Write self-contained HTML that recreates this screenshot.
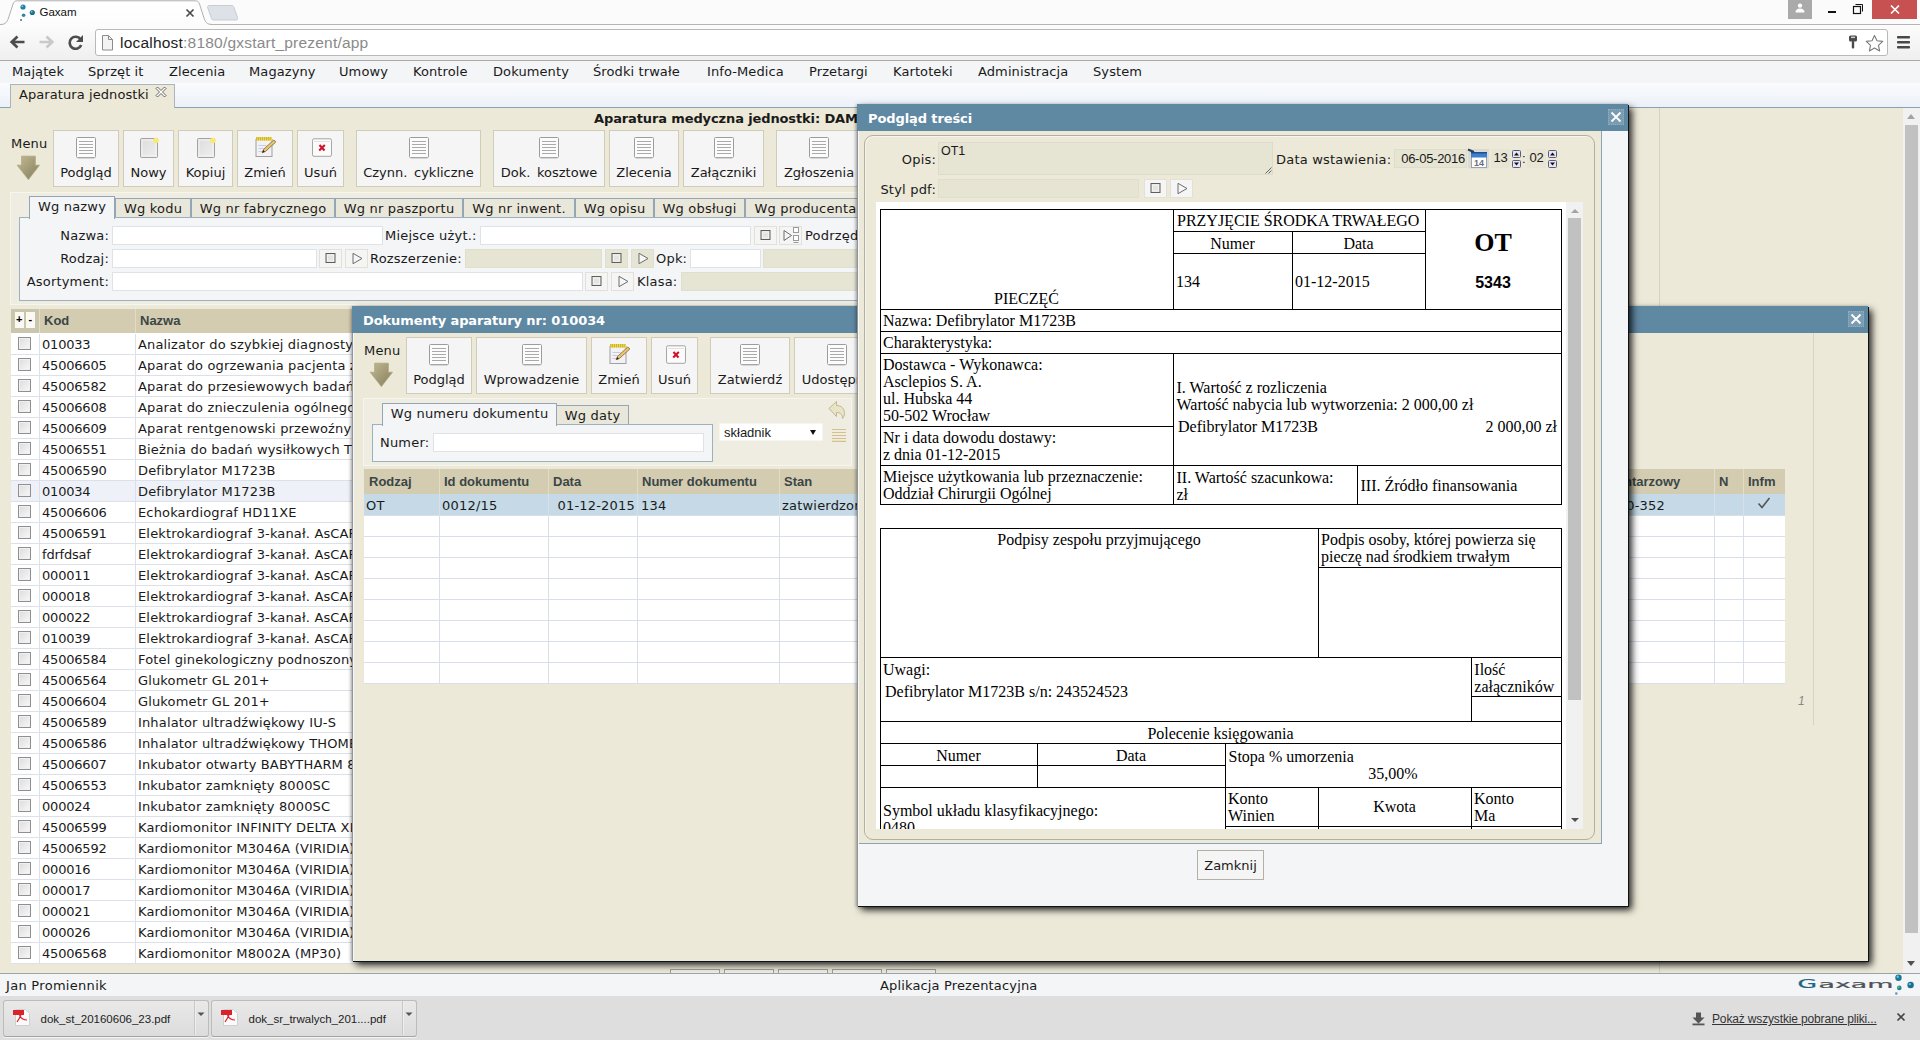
<!DOCTYPE html>
<html lang="pl"><head><meta charset="utf-8"><title>Gaxam</title>
<style>
*{box-sizing:border-box;margin:0;padding:0}
html,body{width:1920px;height:1040px;overflow:hidden;background:#ece9d8}
body{font-family:"DejaVu Sans","Liberation Sans",sans-serif;font-size:13px;color:#1a1a1a;position:relative}
.abs{position:absolute}
.ui{font-family:"Liberation Sans",sans-serif}
.b{font-weight:bold}
svg.ic{display:block;overflow:visible}
/* chrome */
#frame{left:0;top:0;width:1920px;height:24px;background:#fbfbfb}
#tbar{left:0;top:24px;width:1920px;height:37px;background:linear-gradient(#fcfcfc,#efefef);border-top:1px solid #b4b4b4;border-bottom:1px solid #a9a9a9}
#url{left:95px;top:29px;width:1793px;height:27px;background:#fff;border:1px solid #b9b9b9;border-radius:3px}
#menubar{left:0;top:61px;width:1920px;height:22px;background:#f3f5f7}
#tabrow{left:0;top:83px;width:1920px;height:25px;background:linear-gradient(#fafbfd,#ecf1f8);border-bottom:1px solid #8aa0b4}
#ptab{left:10px;top:84px;width:165px;height:24px;background:#ece9d8;border:1px solid #aab4be;border-bottom:none}
.mi{position:absolute;top:64px;font-size:13px;white-space:nowrap;line-height:16px;letter-spacing:.1px}
/* status */
#status{left:0;top:973px;width:1920px;height:23px;background:#f3f5f7;border-top:1px solid #9aa4ab}
#dlbar{left:0;top:996px;width:1920px;height:44px;background:#dedede}
/* toolbar buttons */
.tb{position:absolute;background:#f5f5f5;border:1px solid #d0ccb9;text-align:center;white-space:nowrap;font-size:13px}
.tb span{position:absolute;left:0;right:0;bottom:5px;line-height:16px;word-spacing:2.500px}
.ftab{position:absolute;border:1px solid #94a6b5;border-bottom:none;background:#e9e7d9;text-align:center;line-height:19px;white-space:nowrap;letter-spacing:.2px}
.ftab.sel{background:#f3f5f7;line-height:20px}

.inp{position:absolute;height:19px;background:#fff;border:1px solid #dfe2e6}
.inp.dis{background:#e6e4d3;border-color:#e0decd}
.lbl{position:absolute;white-space:nowrap;line-height:16px;margin-top:1px;letter-spacing:.2px}
.sb{position:absolute;width:23px;height:19px;background:#f5f5f5;border:1px solid #e3e1d5}
.sb.dis{background:#e6e4d3;border-color:#e0decd}
.pm{position:absolute;width:9.600px;height:15.800px;background:#faf9f2;font-size:11px;line-height:15px;text-align:center;color:#000;font-family:"Liberation Sans",sans-serif;font-weight:bold}
.gh{position:absolute;font-family:"Liberation Sans",sans-serif;font-weight:bold;font-size:13px;color:#3b4646;line-height:16px;white-space:nowrap;margin-top:1px}
.gr{position:relative;height:21px;background:#fff;border-bottom:1px solid #dce1e9;white-space:nowrap;overflow:hidden}
.gr.sel{background:#eef2f8}
.gr b{font-weight:normal;position:absolute;top:3px;line-height:16px}
.gr .c1{left:31px;letter-spacing:-.2px}.gr .c2{left:127px;letter-spacing:.15px}
.gr:before{content:"";position:absolute;left:28px;top:0;width:1px;height:21px;background:#dce1e9}
.gr:after{content:"";position:absolute;left:124px;top:0;width:1px;height:21px;background:#dce1e9}
.cb{position:absolute;left:7px;top:3px;width:13px;height:13px;border:1px solid #8e8f8f;background:linear-gradient(135deg,#dcdcdc,#f8f8f8);box-shadow:inset 0 0 0 1px #f0f0f0}
/* dialogs */
.dlg{position:absolute;background:#ece9d8;box-shadow:1px 1px 0 #0c1216,4px 4px 7px rgba(0,0,0,.85),-1px 1px 3px rgba(0,0,0,.28)}
.ledge{position:absolute;left:0;top:27px;bottom:0;width:2px;background:#f6f8fa;border-left:1px solid #8f949e}
.dtitle{position:absolute;left:0;top:0;right:0;height:27px;background:#5f88a2;color:#fff;font-weight:bold;font-size:13px;line-height:29px;padding-left:11px;letter-spacing:-.1px}
.xbtn{position:absolute;top:5px;right:4px;width:16px;height:16px;background:#7a9cb1;border:1px dotted #8fadbf}
.xbtn svg{position:absolute;left:-1px;top:-1px}
.ln{position:absolute;background:#000;display:block}
.st{position:absolute;white-space:nowrap;line-height:17px}
.dl{position:absolute;top:1000px;width:205.500px;height:36.500px;background:linear-gradient(#e9e9e9,#dcdcdc);border:1px solid #bcbcbc;border-bottom-color:#a4a4a4;border-radius:3px;box-shadow:0 1px 0 #f4f4f4}
.dl i{position:absolute;left:189.500px;top:0;width:1px;height:34px;background:#c8c8c8;border-right:1px solid #eee;box-sizing:content-box}
.dl span{position:absolute;left:36.500px;top:10px;font-family:"Liberation Sans",sans-serif;font-size:11.500px;line-height:16px;color:#222;white-space:nowrap}

</style></head><body>
<svg width="0" height="0" style="position:absolute"><defs>
<linearGradient id="ga" x1="0" y1="0" x2="1" y2="1"><stop offset="0" stop-color="#c2b994"/><stop offset="1" stop-color="#857d5a"/></linearGradient>
<symbol id="arrow" viewBox="0 0 24 26"><path d="M5.700 1.200H19.300V10.200H23.500L12.400 24.600L1.200 10.200H5.700Z" fill="url(#ga)" stroke="#b0a882" stroke-width=".9"/></symbol>
<symbol id="doc" viewBox="0 0 22 24"><rect x="1.500" y="1.500" width="19" height="20" rx="1" fill="#fcfcfc" stroke="#9c9c9c"/><path d="M4 5.500h14M4 8.500h14M4 11.500h14M4 14.500h14M4 17.500h14" stroke="#a9a9a9"/><path d="M2.500 22.300h17" stroke="#cfcfcf"/></symbol>
<symbol id="new" viewBox="0 0 22 24"><defs><linearGradient id="gn" x1="0" y1="0" x2="1" y2="1"><stop offset="0" stop-color="#dcdcdc"/><stop offset="1" stop-color="#efefef"/></linearGradient></defs><rect x="2.500" y="2.500" width="17" height="19" rx="1" fill="url(#gn)" stroke="#a2a2a2"/><rect x="4" y="4" width="14" height="16" fill="none" stroke="#f4f4f4"/><circle cx="18" cy="4.500" r="2.800" fill="#f7ea70"/></symbol>
<symbol id="edit" viewBox="0 0 22 24"><rect x="2" y="3.500" width="16" height="17" fill="#f1f1f6" stroke="#a0a0a0"/><path d="M4.500 9.500h8M4.500 12.500h6M4.500 15.500h4" stroke="#c8cbe0"/><rect x="2" y="1" width="16" height="3.600" fill="#ecd84a"/><path d="M2.500 2.800h15" stroke="#b79c28" stroke-width="3.600" stroke-dasharray=".6 1.300"/><path d="M8.200 16.700l1.300-3.200L19.800 4l2 2-10.400 9.500z" fill="#e8c878" stroke="#8d6b2a" stroke-width=".9"/><path d="M8.200 16.700l1.100-2.600 1.600 1.700z" fill="#222"/></symbol>
<symbol id="del" viewBox="0 0 22 24"><rect x="2.500" y="2.800" width="19" height="17.500" rx="1.500" fill="#fbfbfb" stroke="#a6a6a6"/><path d="M4 5.500h16" stroke="#e2e2e2"/><path d="M9.500 9l5 5.500m.3-5.500l-5.600 5.500" stroke="#d0122a" stroke-width="2.100"/></symbol>
<symbol id="sq" viewBox="0 0 21 19"><rect x="6" y="4.500" width="9" height="9" fill="#e4e4e2" stroke="#5e5e5e"/><rect x="7.500" y="6" width="6" height="6" fill="none" stroke="#f2f2f0"/></symbol>
<symbol id="tri" viewBox="0 0 21 19"><path d="M7 4.300l9 5.200-9 5.200z" fill="#f6f6f6" stroke="#6d6d6d"/></symbol>
<symbol id="tree" viewBox="0 0 21 19"><path d="M4 4.500l7.500 5-7.500 5z" fill="#f6f6f6" stroke="#6d6d6d"/><rect x="13.500" y="1.500" width="5" height="5" fill="#fff" stroke="#9a9a9a"/><rect x="13.500" y="9.500" width="5" height="5" fill="#fff" stroke="#9a9a9a"/><path d="M13.500 16.500h5" stroke="#9a9a9a"/></symbol>
</defs></svg>
<div class="abs" id="frame"></div>
<div class="abs" id="tbar"></div>
<svg class="abs" style="left:0;top:0" width="260" height="26"><defs><linearGradient id="tg" x1="0" y1="0" x2="0" y2="1"><stop offset="0" stop-color="#ffffff"/><stop offset="1" stop-color="#fcfcfc"/></linearGradient></defs>
<path d="M0 24.5C6 24.5 7 22 8.5 18L13 4C14 1.5 15 0.8 17.5 0.8H195C197.500 0.800 198.500 1.500 199.500 4L204 18C205.500 22 206.500 24.500 212.500 24.500V26H0Z" fill="url(#tg)" stroke="#b0b0b0" stroke-width="1"/>
<rect x="0" y="25" width="260" height="1" fill="#fcfcfc"/>
<path d="M209 5.500H231.500C233 5.500 233.500 6 234 7.500L237.500 17.500C238 19 237.500 20 236 20H214C212.500 20 211.800 19.500 211.300 18L207.800 8C207.300 6.500 207.700 5.500 209 5.500Z" fill="#dde1e8" stroke="#c9ccd2" stroke-width="1"/>
<circle cx="23" cy="7" r="2.600" fill="#1f7f9c"/><circle cx="22.300" cy="6.300" r="1" fill="#6fc0d8"/>
<circle cx="32.300" cy="12.500" r="2.600" fill="#1d6f90"/><circle cx="31.600" cy="11.800" r="1" fill="#6fc0d8"/>
<circle cx="23.600" cy="15.200" r="1.800" fill="#2a8796"/><circle cx="21" cy="20" r="1" fill="#46708a"/>
<path d="M186.500 9.500l7 7m0-7l-7 7" stroke="#4a4a4a" stroke-width="1.700"/>
</svg>
<div class="abs ui" style="left:39.500px;top:5px;font-size:11.500px;line-height:15px;color:#111">Gaxam</div>
<!-- window controls -->
<div class="abs" style="left:1788px;top:0;width:24px;height:19px;background:#aaa"></div>
<svg class="abs" style="left:1788px;top:0" width="132" height="20"><circle cx="12" cy="5.600" r="2.200" fill="#fff"/><path d="M7.500 12.500c0-3 2-4 4.500-4s4.500 1 4.500 4z" fill="#fff"/>
<rect x="40" y="11" width="8" height="2" fill="#111"/>
<path d="M67.500 4.500h7v7" fill="none" stroke="#111" stroke-width="1"/><rect x="65.500" y="6.500" width="7" height="7" fill="#fcfcfc" stroke="#111" stroke-width="1.200"/>
<rect x="84" y="0" width="45" height="19" fill="#c75050"/><path d="M103 5.500l8 8m0-8l-8 8" stroke="#fff" stroke-width="1.700"/></svg>
<!-- nav icons -->
<svg class="abs" style="left:0;top:26px" width="120" height="34">
<path d="M24.500 16H13M17.500 10.500l-5.800 5.500 5.800 5.500" fill="none" stroke="#4d4d4d" stroke-width="2.700" stroke-linejoin="miter"/>
<path d="M39.500 16H51M46.500 10.500l5.800 5.500-5.800 5.500" fill="none" stroke="#c9c9c9" stroke-width="2.700"/>
<path d="M80.500 13.200A6 6 0 1 0 81.200 19" fill="none" stroke="#4d4d4d" stroke-width="2.700"/><path d="M83 9v7h-7z" fill="#4d4d4d"/>
</svg>
<div class="abs" id="url"></div>
<svg class="abs" style="left:0;top:26px" width="120" height="34"><path d="M102.500 9.500h6l4 4v10.500h-10z" fill="#f3f3f3" stroke="#8c8c8c" stroke-width="1"/><path d="M108.500 9.500v4h4" fill="none" stroke="#8c8c8c"/>
</svg>
<div class="abs ui" style="left:120px;top:33px;font-size:15.500px;line-height:19px;color:#222;letter-spacing:.21px">localhost<span style="color:#8a8a8a">:8180/gxstart_prezent/app</span></div>
<svg class="abs" style="left:1840px;top:28px" width="80" height="30">
<rect x="9" y="7.500" width="8" height="6" rx="1.500" fill="#4a4a4a"/><rect x="11" y="8.600" width="4" height="1.500" fill="#cfcfcf"/><rect x="11.800" y="13" width="2.400" height="7.500" rx="1" fill="#4a4a4a"/>
<path d="M34.500 7.500l2.500 5.200 5.700.7-4.200 3.900 1.100 5.600-5.100-2.800-5.100 2.800 1.100-5.600-4.200-3.900 5.700-.7z" fill="#fff" stroke="#7a7a7a" stroke-width="1.100" stroke-linejoin="round"/>
<rect x="57" y="8" width="13" height="2.600" rx=".8" fill="#484848"/><rect x="57" y="13" width="13" height="2.600" rx=".8" fill="#484848"/><rect x="57" y="18" width="13" height="2.600" rx=".8" fill="#484848"/>
</svg>
<div class="abs" id="menubar"></div>
<div class="mi" style="left:12px">Majątek</div><div class="mi" style="left:88px">Sprzęt it</div><div class="mi" style="left:169px">Zlecenia</div><div class="mi" style="left:249px">Magazyny</div><div class="mi" style="left:339px">Umowy</div><div class="mi" style="left:413px">Kontrole</div><div class="mi" style="left:493px">Dokumenty</div><div class="mi" style="left:593px">Środki trwałe</div><div class="mi" style="left:707px">Info-Medica</div><div class="mi" style="left:809px">Przetargi</div><div class="mi" style="left:893px">Kartoteki</div><div class="mi" style="left:978px">Administracja</div><div class="mi" style="left:1093px">System</div>
<div class="abs" id="tabrow"></div>
<div class="abs" id="ptab"></div>
<div class="lbl" style="left:19px;top:86px;letter-spacing:.08px">Aparatura jednostki</div>
<svg class="abs" style="left:153.500px;top:84.500px" width="14" height="14"><path d="M2 3.500L3.500 2 7 5.500 10.500 2 12 3.500 8.500 7 12 10.500 10.500 12 7 8.500 3.500 12 2 10.500 5.500 7Z" fill="#fff" stroke="#555" stroke-width=".9"/></svg>
<div id="main">
<div class="lbl b" style="left:594px;top:110px;letter-spacing:-.12px">Aparatura medyczna jednostki: DAM</div>
<div class="abs" style="left:1659px;top:108px;width:1px;height:865px;background:#d5d3c6"></div>
<div class="lbl" style="left:11px;top:135px">Menu</div><svg class="ic" width="24" height="26" style="position:absolute;left:16px;top:155px"><use href="#arrow"/></svg>
<div class="tb" style="left:53px;top:130px;width:66px;height:57px"><svg class="ic" width="22" height="24" style="position:absolute;top:5px;left:50%;margin-left:-11px"><use href="#doc"/></svg><span>Podgląd</span></div>
<div class="tb" style="left:123px;top:130px;width:51px;height:57px"><svg class="ic" width="22" height="24" style="position:absolute;top:5px;left:50%;margin-left:-11px"><use href="#new"/></svg><span>Nowy</span></div>
<div class="tb" style="left:178px;top:130px;width:55px;height:57px"><svg class="ic" width="22" height="24" style="position:absolute;top:5px;left:50%;margin-left:-11px"><use href="#new"/></svg><span>Kopiuj</span></div>
<div class="tb" style="left:237px;top:130px;width:56px;height:57px"><svg class="ic" width="22" height="24" style="position:absolute;top:5px;left:50%;margin-left:-11px"><use href="#edit"/></svg><span>Zmień</span></div>
<div class="tb" style="left:297px;top:130px;width:47px;height:57px"><svg class="ic" width="22" height="24" style="position:absolute;top:5px;left:50%;margin-left:-11px"><use href="#del"/></svg><span>Usuń</span></div>
<div class="tb" style="left:356px;top:130px;width:125px;height:57px"><svg class="ic" width="22" height="24" style="position:absolute;top:5px;left:50%;margin-left:-11px"><use href="#doc"/></svg><span>Czynn. cykliczne</span></div>
<div class="tb" style="left:493px;top:130px;width:112px;height:57px"><svg class="ic" width="22" height="24" style="position:absolute;top:5px;left:50%;margin-left:-11px"><use href="#doc"/></svg><span>Dok. kosztowe</span></div>
<div class="tb" style="left:609px;top:130px;width:70px;height:57px"><svg class="ic" width="22" height="24" style="position:absolute;top:5px;left:50%;margin-left:-11px"><use href="#doc"/></svg><span>Zlecenia</span></div>
<div class="tb" style="left:683px;top:130px;width:81px;height:57px"><svg class="ic" width="22" height="24" style="position:absolute;top:5px;left:50%;margin-left:-11px"><use href="#doc"/></svg><span>Załączniki</span></div>
<div class="tb" style="left:776px;top:130px;width:86px;height:57px"><svg class="ic" width="22" height="24" style="position:absolute;top:5px;left:50%;margin-left:-11px"><use href="#doc"/></svg><span>Zgłoszenia</span></div>
<div class="abs" style="left:10px;top:192px;width:900px;height:113px;background:#efede1;border:1px solid #f6f5ee"></div>
<div class="abs" style="left:19px;top:217px;width:900px;height:84px;background:#f3f5f7;border:1px solid #9db0c0"></div>
<div class="ftab sel" style="left:29px;top:196px;width:86px;height:23px">Wg nazwy</div>
<div class="ftab" style="left:115px;top:198px;width:76px;height:19px">Wg kodu</div>
<div class="ftab" style="left:191px;top:198px;width:144px;height:19px">Wg nr fabrycznego</div>
<div class="ftab" style="left:335px;top:198px;width:128px;height:19px">Wg nr paszportu</div>
<div class="ftab" style="left:463px;top:198px;width:112px;height:19px">Wg nr inwent.</div>
<div class="ftab" style="left:575px;top:198px;width:79px;height:19px">Wg opisu</div>
<div class="ftab" style="left:654px;top:198px;width:91px;height:19px">Wg obsługi</div>
<div class="ftab" style="left:745px;top:198px;width:121px;height:19px">Wg producenta</div>
<div class="lbl" style="right:1811px;top:227px">Nazwa:</div>
<div class="inp" style="left:112px;top:226px;width:271px"></div>
<div class="lbl" style="left:385px;top:227px">Miejsce użyt.:</div>
<div class="inp" style="left:480px;top:226px;width:271px"></div>
<div class="sb" style="left:754px;top:226px"><svg class="ic" width="21" height="19" style="position:absolute;left:0;top:-1px"><use href="#sq"/></svg></div>
<div class="sb" style="left:779px;top:226px"><svg class="ic" width="21" height="19" style="position:absolute;left:0;top:-1px"><use href="#tree"/></svg></div>
<div class="lbl" style="left:805px;top:227px">Podrzędne</div>
<div class="lbl" style="right:1811px;top:250px">Rodzaj:</div>
<div class="inp" style="left:112px;top:249px;width:205px"></div>
<div class="sb" style="left:319px;top:249px"><svg class="ic" width="21" height="19" style="position:absolute;left:0;top:-1px"><use href="#sq"/></svg></div>
<div class="sb" style="left:345px;top:249px"><svg class="ic" width="21" height="19" style="position:absolute;left:0;top:-1px"><use href="#tri"/></svg></div>
<div class="lbl" style="left:370px;top:250px">Rozszerzenie:</div>
<div class="inp dis" style="left:465px;top:249px;width:137px"></div>
<div class="sb dis" style="left:605px;top:249px"><svg class="ic" width="21" height="19" style="position:absolute;left:0;top:-1px"><use href="#sq"/></svg></div>
<div class="sb dis" style="left:631px;top:249px"><svg class="ic" width="21" height="19" style="position:absolute;left:0;top:-1px"><use href="#tri"/></svg></div>
<div class="lbl" style="left:656px;top:250px">Opk:</div>
<div class="inp" style="left:690px;top:249px;width:71px"></div>
<div class="inp dis" style="left:763px;top:249px;width:120px"></div>
<div class="lbl" style="right:1811px;top:273px">Asortyment:</div>
<div class="inp" style="left:112px;top:272px;width:471px"></div>
<div class="sb" style="left:585px;top:272px"><svg class="ic" width="21" height="19" style="position:absolute;left:0;top:-1px"><use href="#sq"/></svg></div>
<div class="sb" style="left:611px;top:272px"><svg class="ic" width="21" height="19" style="position:absolute;left:0;top:-1px"><use href="#tri"/></svg></div>
<div class="lbl" style="left:637px;top:273px">Klasa:</div>
<div class="inp dis" style="left:681px;top:272px;width:200px"></div>
<div class="abs" style="left:11px;top:309px;width:900px;height:24px;background:#d3ccb1"></div><div class="abs" style="left:11px;top:309px;width:28px;height:24px;background:#cac6ae"></div><div class="abs" style="left:11px;top:333px;width:900px;height:2px;background:#fff"></div>
<div class="abs" style="left:39px;top:309px;width:1px;height:24px;background:#e2ddc8"></div><div class="abs" style="left:135px;top:309px;width:1px;height:24px;background:#e2ddc8"></div>
<div class="pm" style="left:14.500px;top:312.200px">+</div><div class="pm" style="left:25.600px;top:312.200px">-</div>
<div class="gh" style="left:44px;top:312px">Kod</div><div class="gh" style="left:140px;top:312px">Nazwa</div>
<div class="abs" id="grid" style="left:11px;top:334px;width:900px">
<div class="gr"><i class="cb"></i><b class="c1">010033</b><b class="c2">Analizator do szybkiej diagnostyki</b></div>
<div class="gr"><i class="cb"></i><b class="c1">45006605</b><b class="c2">Aparat do ogrzewania pacjenta z</b></div>
<div class="gr"><i class="cb"></i><b class="c1">45006582</b><b class="c2">Aparat do przesiewowych badań s</b></div>
<div class="gr"><i class="cb"></i><b class="c1">45006608</b><b class="c2">Aparat do znieczulenia ogólnego</b></div>
<div class="gr"><i class="cb"></i><b class="c1">45006609</b><b class="c2">Aparat rentgenowski przewoźny</b></div>
<div class="gr"><i class="cb"></i><b class="c1">45006551</b><b class="c2">Bieżnia do badań wysiłkowych TR</b></div>
<div class="gr"><i class="cb"></i><b class="c1">45006590</b><b class="c2">Defibrylator M1723B</b></div>
<div class="gr sel"><i class="cb"></i><b class="c1">010034</b><b class="c2">Defibrylator M1723B</b></div>
<div class="gr"><i class="cb"></i><b class="c1">45006606</b><b class="c2">Echokardiograf HD11XE</b></div>
<div class="gr"><i class="cb"></i><b class="c1">45006591</b><b class="c2">Elektrokardiograf 3-kanał. AsCARD</b></div>
<div class="gr"><i class="cb"></i><b class="c1">fdrfdsaf</b><b class="c2">Elektrokardiograf 3-kanał. AsCARD</b></div>
<div class="gr"><i class="cb"></i><b class="c1">000011</b><b class="c2">Elektrokardiograf 3-kanał. AsCARD</b></div>
<div class="gr"><i class="cb"></i><b class="c1">000018</b><b class="c2">Elektrokardiograf 3-kanał. AsCARD</b></div>
<div class="gr"><i class="cb"></i><b class="c1">000022</b><b class="c2">Elektrokardiograf 3-kanał. AsCARD</b></div>
<div class="gr"><i class="cb"></i><b class="c1">010039</b><b class="c2">Elektrokardiograf 3-kanał. AsCARD</b></div>
<div class="gr"><i class="cb"></i><b class="c1">45006584</b><b class="c2">Fotel ginekologiczny podnoszony</b></div>
<div class="gr"><i class="cb"></i><b class="c1">45006564</b><b class="c2">Glukometr GL 201+</b></div>
<div class="gr"><i class="cb"></i><b class="c1">45006604</b><b class="c2">Glukometr GL 201+</b></div>
<div class="gr"><i class="cb"></i><b class="c1">45006589</b><b class="c2">Inhalator ultradźwiękowy IU-S</b></div>
<div class="gr"><i class="cb"></i><b class="c1">45006586</b><b class="c2">Inhalator ultradźwiękowy THOMEX</b></div>
<div class="gr"><i class="cb"></i><b class="c1">45006607</b><b class="c2">Inkubator otwarty BABYTHARM 8</b></div>
<div class="gr"><i class="cb"></i><b class="c1">45006553</b><b class="c2">Inkubator zamknięty 8000SC</b></div>
<div class="gr"><i class="cb"></i><b class="c1">000024</b><b class="c2">Inkubator zamknięty 8000SC</b></div>
<div class="gr"><i class="cb"></i><b class="c1">45006599</b><b class="c2">Kardiomonitor INFINITY DELTA XL</b></div>
<div class="gr"><i class="cb"></i><b class="c1">45006592</b><b class="c2">Kardiomonitor M3046A (VIRIDIA)</b></div>
<div class="gr"><i class="cb"></i><b class="c1">000016</b><b class="c2">Kardiomonitor M3046A (VIRIDIA)</b></div>
<div class="gr"><i class="cb"></i><b class="c1">000017</b><b class="c2">Kardiomonitor M3046A (VIRIDIA)</b></div>
<div class="gr"><i class="cb"></i><b class="c1">000021</b><b class="c2">Kardiomonitor M3046A (VIRIDIA)</b></div>
<div class="gr"><i class="cb"></i><b class="c1">000026</b><b class="c2">Kardiomonitor M3046A (VIRIDIA)</b></div>
<div class="gr"><i class="cb"></i><b class="c1">45006568</b><b class="c2">Kardiomonitor M8002A (MP30)</b></div>
</div>
<div class="abs" style="left:670px;top:969px;width:50px;height:10px;background:#efeee6;border:1px solid #a09e94"></div>
<div class="abs" style="left:724px;top:969px;width:50px;height:10px;background:#efeee6;border:1px solid #a09e94"></div>
<div class="abs" style="left:778px;top:969px;width:50px;height:10px;background:#efeee6;border:1px solid #a09e94"></div>
<div class="abs" style="left:832px;top:969px;width:50px;height:10px;background:#efeee6;border:1px solid #a09e94"></div>
<div class="abs" style="left:886px;top:969px;width:50px;height:10px;background:#efeee6;border:1px solid #a09e94"></div>
<div class="abs" style="left:1903px;top:108px;width:17px;height:865px;background:#f1f1f1"></div><div class="abs" style="left:1905px;top:125px;width:13px;height:808px;background:#c1c1c1"></div>
<div class="abs" style="left:1907px;top:114px;border:4.5px solid transparent;border-top:none;border-bottom:5px solid #a3a3a3;width:0;height:0"></div><div class="abs" style="left:1907px;top:961px;border:4.5px solid transparent;border-bottom:none;border-top:5px solid #505050;width:0;height:0"></div>
</div>
<div class="dlg" id="d1" style="left:352px;top:306px;width:1516px;height:655px"><div class="dtitle">Dokumenty aparatury nr: 010034</div><div class="xbtn"><svg width="16" height="16"><path d="M3.500 3.500l9 9m0-9l-9 9" stroke="#fff" stroke-width="1.800"/></svg></div>
<div class="ledge"></div>
<div class="lbl" style="left:12px;top:36px">Menu</div><svg class="ic" width="24" height="26" style="position:absolute;left:17px;top:56px"><use href="#arrow"/></svg>
<div class="tb" style="left:54px;top:31px;width:66px;height:57px"><svg class="ic" width="22" height="24" style="position:absolute;top:5px;left:50%;margin-left:-11px"><use href="#doc"/></svg><span>Podgląd</span></div>
<div class="tb" style="left:124px;top:31px;width:111px;height:57px"><svg class="ic" width="22" height="24" style="position:absolute;top:5px;left:50%;margin-left:-11px"><use href="#doc"/></svg><span>Wprowadzenie</span></div>
<div class="tb" style="left:239px;top:31px;width:56px;height:57px"><svg class="ic" width="22" height="24" style="position:absolute;top:5px;left:50%;margin-left:-11px"><use href="#edit"/></svg><span>Zmień</span></div>
<div class="tb" style="left:299px;top:31px;width:47px;height:57px"><svg class="ic" width="22" height="24" style="position:absolute;top:5px;left:50%;margin-left:-11px"><use href="#del"/></svg><span>Usuń</span></div>
<div class="tb" style="left:358px;top:31px;width:80px;height:57px"><svg class="ic" width="22" height="24" style="position:absolute;top:5px;left:50%;margin-left:-11px"><use href="#doc"/></svg><span>Zatwierdź</span></div>
<div class="tb" style="left:442px;top:31px;width:85px;height:57px"><svg class="ic" width="22" height="24" style="position:absolute;top:5px;left:50%;margin-left:-11px"><use href="#doc"/></svg><span>Udostępnij</span></div>
<div class="abs" style="left:11px;top:92px;width:489px;height:68px;background:#efede1;border:1px solid #f6f5ee"></div>
<div class="abs" style="left:20px;top:118px;width:341px;height:38px;background:#f3f5f7;border:1px solid #9db0c0"></div>
<div class="ftab sel" style="left:30px;top:97px;width:175px;height:23px">Wg numeru dokumentu</div>
<div class="ftab" style="left:204px;top:99px;width:73px;height:19px">Wg daty</div>
<div class="lbl" style="left:28px;top:128px">Numer:</div>
<div class="inp" style="left:81px;top:127px;width:271px"></div>
<div class="abs ui" style="left:367px;top:116px;width:101.500px;height:16.500px;background:#fff;border:1px solid #f6f5ee;box-sizing:content-box;font-size:13px;line-height:17px;padding-left:0;text-indent:4px;margin-top:.5px">składnik<span style="position:absolute;right:6px;top:6px;border:3.500px solid transparent;border-top:5px solid #111;border-bottom:none;width:0;height:0"></span></div>
<svg class="abs" style="left:475px;top:93px" width="20" height="46"><path d="M2 9.500l7.500-7v4c5 0 8 3 8 8 0 2-1 4-2 5 0-4-2-6-6-6v4z" fill="#e9e3c8" stroke="#c3b78e" stroke-width="1"/><path d="M5 30.500h14M5 33.500h14M5 36.500h14M5 39.500h14M5 42.300h14" stroke="#d4c089" stroke-width="1.200"/></svg>
<div class="abs" style="left:12px;top:163px;width:1421px;height:25px;background:#d3ccb1"></div>
<div class="abs" style="left:12px;top:188px;width:1421px;height:190px;background:#fff"></div>
<div class="abs" style="left:12px;top:188px;width:1421px;height:21px;background:#c5dae6"></div>
<div class="abs" style="left:12px;top:209px;width:1421px;height:1px;background:#d9dfe8"></div>
<div class="abs" style="left:12px;top:230px;width:1421px;height:1px;background:#d9dfe8"></div>
<div class="abs" style="left:12px;top:251px;width:1421px;height:1px;background:#d9dfe8"></div>
<div class="abs" style="left:12px;top:272px;width:1421px;height:1px;background:#d9dfe8"></div>
<div class="abs" style="left:12px;top:293px;width:1421px;height:1px;background:#d9dfe8"></div>
<div class="abs" style="left:12px;top:314px;width:1421px;height:1px;background:#d9dfe8"></div>
<div class="abs" style="left:12px;top:335px;width:1421px;height:1px;background:#d9dfe8"></div>
<div class="abs" style="left:12px;top:356px;width:1421px;height:1px;background:#d9dfe8"></div>
<div class="abs" style="left:12px;top:377px;width:1421px;height:1px;background:#d9dfe8"></div>
<div class="abs" style="left:87px;top:163px;width:1px;height:25px;background:#e2ddc8"></div><div class="abs" style="left:87px;top:188px;width:1px;height:190px;background:#d9dfe8"></div>
<div class="abs" style="left:196px;top:163px;width:1px;height:25px;background:#e2ddc8"></div><div class="abs" style="left:196px;top:188px;width:1px;height:190px;background:#d9dfe8"></div>
<div class="abs" style="left:285px;top:163px;width:1px;height:25px;background:#e2ddc8"></div><div class="abs" style="left:285px;top:188px;width:1px;height:190px;background:#d9dfe8"></div>
<div class="abs" style="left:427px;top:163px;width:1px;height:25px;background:#e2ddc8"></div><div class="abs" style="left:427px;top:188px;width:1px;height:190px;background:#d9dfe8"></div>
<div class="abs" style="left:1362px;top:163px;width:1px;height:25px;background:#e2ddc8"></div><div class="abs" style="left:1362px;top:188px;width:1px;height:190px;background:#d9dfe8"></div>
<div class="abs" style="left:1391px;top:163px;width:1px;height:25px;background:#e2ddc8"></div><div class="abs" style="left:1391px;top:188px;width:1px;height:190px;background:#d9dfe8"></div>
<div class="gh" style="left:17px;top:167px">Rodzaj</div><div class="gh" style="left:92px;top:167px">Id dokumentu</div><div class="gh" style="left:201px;top:167px">Data</div><div class="gh" style="left:290px;top:167px">Numer dokumentu</div><div class="gh" style="left:432px;top:167px">Stan</div><div class="gh" style="left:1367px;top:167px">N</div><div class="gh" style="left:1396px;top:167px">Infm</div><div class="gh" style="left:1225px;top:167px">Nr inwentarzowy</div>

<div class="lbl" style="left:14px;top:191px">OT</div><div class="lbl" style="left:90px;top:191px">0012/15</div><div class="lbl" style="right:1233px;top:191px">01-12-2015</div><div class="lbl" style="left:289px;top:191px">134</div><div class="lbl" style="left:430px;top:191px">zatwierdzony</div><div class="lbl" style="right:203px;top:191px">ST/00000-352</div>
<svg class="abs" style="left:1405px;top:191px" width="14" height="12"><path d="M1.500 6.500l3.500 4 7.500-9.500" fill="none" stroke="#555" stroke-width="1.600"/></svg>
<div class="abs" style="left:1461px;top:27px;width:1px;height:392px;background:#d5d3c6"></div>
<div class="abs ui" style="left:1446px;top:388px;font-style:italic;font-size:12px;color:#888">1</div>
</div>
<div class="dlg" id="d2" style="left:857px;top:104px;width:771px;height:802px;background:#f3f5f7"><div class="dtitle">Podgląd treści</div><div class="xbtn"><svg width="16" height="16"><path d="M3.500 3.500l9 9m0-9l-9 9" stroke="#fff" stroke-width="1.800"/></svg></div>
<div class="ledge"></div><div class="abs" style="left:2px;top:27px;width:743px;height:713px;background:#ece9d8;border-right:1px solid #8aa5b9;border-bottom:1px solid #8aa5b9"></div>
<div class="abs" style="left:7px;top:31px;width:731px;height:705px;border:1px solid #b3af9f;border-radius:9px;box-shadow:inset 1px 1px 0 #f7f5ec"></div>
<div class="lbl" style="right:692px;top:47px">Opis:</div>
<div class="abs ui" style="left:81px;top:38px;width:335px;height:33px;background:#e6e4d3;border:1px solid #dddbc9;font-size:12.500px;line-height:15px;padding:1px 0 0 2px">OT1<svg style="position:absolute;right:0;bottom:0" width="9" height="9"><path d="M8.500 2.500l-6 6M8.500 5.500l-3 3" stroke="#666" stroke-width="1"/></svg></div>
<div class="lbl" style="left:419px;top:47px">Data wstawienia:</div>
<div class="abs ui" style="left:537px;top:45px;width:73px;height:19px;background:#e6e4d3;border:1px solid #dedccb;font-size:13px;line-height:17px;text-align:right;padding-right:1px;letter-spacing:-.27px;white-space:nowrap">06-05-2016</div>
<svg class="abs" style="left:610px;top:44px" width="24" height="22"><rect x="1" y="1" width="21" height="19.500" fill="#dcdad0"/><rect x="4.500" y="4.500" width="15" height="15" fill="#fff" stroke="#9aa3ae"/><rect x="4" y="4" width="16" height="5.500" fill="#3b7ed0"/><rect x="4" y="4" width="16" height="1.500" fill="#1f4f8f"/><path d="M1 1.500l6 2.500" stroke="#2b3f5c" stroke-width="2"/><text x="12" y="18" font-size="9" font-weight="bold" text-anchor="middle" class="ui" fill="#6a6e76">14</text></svg>
<div class="abs ui" style="left:634px;top:45px;width:19px;height:19px;background:#e8e5d5;font-size:13px;line-height:18px;text-align:center;letter-spacing:-.3px">13</div>
<div class="abs ui" style="left:665px;top:45px;font-size:13px;line-height:19px">:</div>
<div class="abs ui" style="left:670px;top:45px;width:19px;height:19px;background:#e8e5d5;font-size:13px;line-height:18px;text-align:center;letter-spacing:-.3px">02</div>
<svg class="abs" style="left:654.5px;top:46px" width="10" height="18"><rect x=".500" y=".500" width="8" height="7" rx="1" fill="#e6e6f2" stroke="#5a5a7c"/><rect x=".500" y="10.500" width="8" height="7" rx="1" fill="#e6e6f2" stroke="#5a5a7c"/><path d="M2 5.500l2.500-3 2.500 3z" fill="#111"/><path d="M2 12.500l2.500 3 2.500-3z" fill="#111"/></svg>
<svg class="abs" style="left:690.5px;top:46px" width="10" height="18"><rect x=".500" y=".500" width="8" height="7" rx="1" fill="#e6e6f2" stroke="#5a5a7c"/><rect x=".500" y="10.500" width="8" height="7" rx="1" fill="#e6e6f2" stroke="#5a5a7c"/><path d="M2 5.500l2.500-3 2.500 3z" fill="#111"/><path d="M2 12.500l2.500 3 2.500-3z" fill="#111"/></svg>
<div class="lbl" style="right:692px;top:77px">Styl pdf:</div>
<div class="inp dis" style="left:81px;top:75px;width:201px"></div>
<div class="sb" style="left:287px;top:75px;width:23px"><svg class="ic" width="21" height="19" style="position:absolute;left:0;top:-1px"><use href="#sq"/></svg></div><div class="sb" style="left:313px;top:75px;width:23px"><svg class="ic" width="21" height="19" style="position:absolute;left:0;top:-1px"><use href="#tri"/></svg></div>
<div class="abs" id="ifr" style="left:19px;top:98px;width:707px;height:627px;background:#fff;overflow:hidden;font-family:'Liberation Serif',serif;font-size:16px;color:#000">
<i class="ln" style="left:4px;top:7px;width:682px;height:1px"></i><i class="ln" style="left:4px;top:107px;width:682px;height:1px"></i><i class="ln" style="left:4px;top:129px;width:682px;height:1px"></i><i class="ln" style="left:4px;top:151px;width:682px;height:1px"></i><i class="ln" style="left:4px;top:263px;width:682px;height:1px"></i><i class="ln" style="left:4px;top:302px;width:682px;height:1px"></i><i class="ln" style="left:4px;top:7px;width:1px;height:296px"></i><i class="ln" style="left:685px;top:7px;width:1px;height:296px"></i><i class="ln" style="left:297px;top:7px;width:1px;height:101px"></i><i class="ln" style="left:297px;top:151px;width:1px;height:152px"></i><i class="ln" style="left:297px;top:29px;width:253px;height:1px"></i><i class="ln" style="left:297px;top:51px;width:253px;height:1px"></i><i class="ln" style="left:416px;top:29px;width:1px;height:79px"></i><i class="ln" style="left:549px;top:7px;width:1px;height:101px"></i><i class="ln" style="left:4px;top:224px;width:294px;height:1px"></i><i class="ln" style="left:481px;top:263px;width:1px;height:40px"></i>
<div class="st" style="left:4px;width:293px;text-align:center;top:88px;">PIECZĘĆ</div><div class="st" style="left:301px;top:10px;">PRZYJĘCIE ŚRODKA TRWAŁEGO</div><div class="st" style="left:297px;width:119px;text-align:center;top:33px;">Numer</div><div class="st" style="left:416px;width:133px;text-align:center;top:33px;">Data</div><div class="st" style="left:300px;top:71px;">134</div><div class="st" style="left:419px;top:71px;">01-12-2015</div><div class="st" style="left:549px;width:136px;text-align:center;top:36px;font-size:26px;font-weight:bold;line-height:28px;margin-top:-9px">OT</div><div class="st" style="left:549px;width:136px;text-align:center;top:72px;font-family:'Liberation Sans',sans-serif;font-weight:bold;font-size:16px">5343</div><div class="st" style="left:7px;top:110px;">Nazwa: Defibrylator M1723B</div><div class="st" style="left:7px;top:132px;">Charakterystyka:</div><div class="st" style="left:7px;top:154px;">Dostawca - Wykonawca:</div><div class="st" style="left:7px;top:171px;">Asclepios S. A.</div><div class="st" style="left:7px;top:188px;">ul. Hubska 44</div><div class="st" style="left:7px;top:205px;">50-502 Wrocław</div><div class="st" style="left:7px;top:226.5px;">Nr i data dowodu dostawy:</div><div class="st" style="left:7px;top:243.5px;">z dnia 01-12-2015</div><div class="st" style="left:7px;top:266px;">Miejsce użytkowania lub przeznaczenie:</div><div class="st" style="left:7px;top:283px;">Oddział Chirurgii Ogólnej</div><div class="st" style="left:300.5px;top:177.3px;">I. Wartość z rozliczenia</div><div class="st" style="left:300.5px;top:194.3px;">Wartość nabycia lub wytworzenia: 2 000,00 zł</div><div class="st" style="left:302px;top:216px;">Defibrylator M1723B</div><div class="st" style="right:26px;text-align:right;top:216px;">2 000,00 zł</div><div class="st" style="left:300.5px;top:266.5px;">II. Wartość szacunkowa:</div><div class="st" style="left:300.5px;top:283.5px;">zł</div><div class="st" style="left:484.5px;top:274.5px;">III. Źródło finansowania</div>
<i class="ln" style="left:4px;top:326px;width:682px;height:1px"></i><i class="ln" style="left:4px;top:455px;width:682px;height:1px"></i><i class="ln" style="left:4px;top:519px;width:682px;height:1px"></i><i class="ln" style="left:4px;top:541px;width:682px;height:1px"></i><i class="ln" style="left:4px;top:563px;width:346px;height:1px"></i><i class="ln" style="left:4px;top:585px;width:682px;height:1px"></i><i class="ln" style="left:349px;top:624px;width:337px;height:1px"></i><i class="ln" style="left:4px;top:326px;width:1px;height:303px"></i><i class="ln" style="left:685px;top:326px;width:1px;height:303px"></i><i class="ln" style="left:442px;top:326px;width:1px;height:130px"></i><i class="ln" style="left:442px;top:365px;width:244px;height:1px"></i><i class="ln" style="left:595px;top:455px;width:1px;height:65px"></i><i class="ln" style="left:595px;top:494px;width:91px;height:1px"></i><i class="ln" style="left:161px;top:541px;width:1px;height:45px"></i><i class="ln" style="left:349px;top:541px;width:1px;height:88px"></i><i class="ln" style="left:442px;top:585px;width:1px;height:44px"></i><i class="ln" style="left:595px;top:585px;width:1px;height:44px"></i><div class="st" style="left:4px;width:438px;text-align:center;top:329.3px;">Podpisy zespołu przyjmującego</div><div class="st" style="left:445px;top:329.3px;">Podpis osoby, której powierza się</div><div class="st" style="left:445px;top:346.3px;">pieczę nad środkiem trwałym</div><div class="st" style="left:7px;top:458.5px;">Uwagi:</div><div class="st" style="left:9px;top:480.8px;">Defibrylator M1723B s/n: 243524523</div><div class="st" style="left:598.3px;top:458.5px;">Ilość</div><div class="st" style="left:598.3px;top:475.5px;">załączników</div><div class="st" style="left:4px;width:681px;text-align:center;top:522.7px;">Polecenie księgowania</div><div class="st" style="left:4px;width:157px;text-align:center;top:544.6px;">Numer</div><div class="st" style="left:161px;width:188px;text-align:center;top:544.6px;">Data</div><div class="st" style="left:352.5px;top:545.6px;">Stopa % umorzenia</div><div class="st" style="left:349px;width:336px;text-align:center;top:562.7px;">35,00%</div><div class="st" style="left:7px;top:599.8px;">Symbol układu klasyfikacyjnego:</div><div class="st" style="left:7px;top:616.8px;">0480</div><div class="st" style="left:352px;top:588px;">Konto</div><div class="st" style="left:352px;top:605px;">Winien</div><div class="st" style="left:442px;width:153px;text-align:center;top:596px;">Kwota</div><div class="st" style="left:598px;top:588px;">Konto</div><div class="st" style="left:598px;top:605px;">Ma</div>
<div class="abs" style="left:690px;top:0;width:17px;height:627px;background:#f1f1f1"></div><div class="abs" style="left:692px;top:16.400000000000006px;width:13px;height:482px;background:#c1c1c1"></div><div class="abs" style="left:694.5px;top:7px;border:4px solid transparent;border-top:none;border-bottom:4px solid #a3a3a3;width:0;height:0"></div><div class="abs" style="left:694.5px;top:616px;border:4px solid transparent;border-bottom:none;border-top:4px solid #505050;width:0;height:0"></div>
</div>
<div class="abs" style="left:340px;top:746px;width:67px;height:30px;background:#f5f5f5;border:1px solid #b3b1a5;text-align:center;line-height:29px">Zamknij</div>
</div>
<div class="abs" id="status"></div>
<div class="lbl" style="left:6px;top:976.500px;letter-spacing:.3px">Jan Promiennik</div>
<div class="lbl" style="left:880px;top:976.500px;letter-spacing:.15px">Aplikacja Prezentacyjna</div>
<svg class="abs" style="left:1790px;top:972px" width="130" height="26">
<text x="7.500" y="16.200" font-family="DejaVu Sans,sans-serif" font-size="11.500" textLength="19.500" lengthAdjust="spacingAndGlyphs" fill="#1f6485" stroke="#1f6485" stroke-width=".2">G</text>
<text x="28.500" y="16.200" font-family="DejaVu Sans,sans-serif" font-size="11" textLength="75" lengthAdjust="spacingAndGlyphs" fill="#4f5358" stroke="#4f5358" stroke-width=".2">axam</text>
<circle cx="108.500" cy="5.700" r="3.200" fill="#1b7893"/><circle cx="107.700" cy="4.800" r="1.200" fill="#6fc3da"/>
<circle cx="120.600" cy="13" r="3.200" fill="#1a6f8e"/><circle cx="119.800" cy="12.100" r="1.200" fill="#6fc3da"/>
<circle cx="109.300" cy="15.900" r="2.300" fill="#23868f"/><circle cx="108.800" cy="15.300" r=".800" fill="#6fd0cf"/><circle cx="106.300" cy="21.500" r="1.300" fill="#6f8fa8"/></svg>
<div class="abs" id="dlbar"></div>
<div class="dl" style="left:3px"><i></i><span>dok_st_20160606_23.pdf</span></div>
<div class="dl" style="left:211px"><i></i><span>dok_sr_trwalych_201....pdf</span></div>
<svg class="abs" style="left:0;top:1000px" width="420" height="36"><g id="pdfi"><path d="M15.500 9.500h10l4 4v12h-14z" fill="#fafafa" stroke="#d0d0d0"/><rect x="13" y="10" width="11" height="5" fill="#d8232a"/><path d="M17 22c2-3 4-6 4-8s-2 0-1 2 4 4 7 4" fill="none" stroke="#d8232a" stroke-width="1.200"/></g><use href="#pdfi" x="208"/>
<path d="M197.500 12.500h7l-3.500 3.500z" fill="#555"/><path d="M405.500 12.500h7l-3.500 3.500z" fill="#555"/></svg>
<svg class="abs" style="left:1690px;top:1010px" width="20" height="18"><path d="M6 2.500h5v5h3.500l-6 6-6-6H6z" fill="#555"/><rect x="2.500" y="13.500" width="12" height="1.800" fill="#555"/></svg>
<div class="abs ui" style="left:1712px;top:1011px;font-size:12px;line-height:16px;color:#333;text-decoration:underline;white-space:nowrap;letter-spacing:-.15px">Pokaż wszystkie pobrane pliki...</div>
<svg class="abs" style="left:1895px;top:1011px" width="12" height="12"><path d="M2.500 2.500l7 7m0-7l-7 7" stroke="#444" stroke-width="1.700"/></svg>
</body></html>
